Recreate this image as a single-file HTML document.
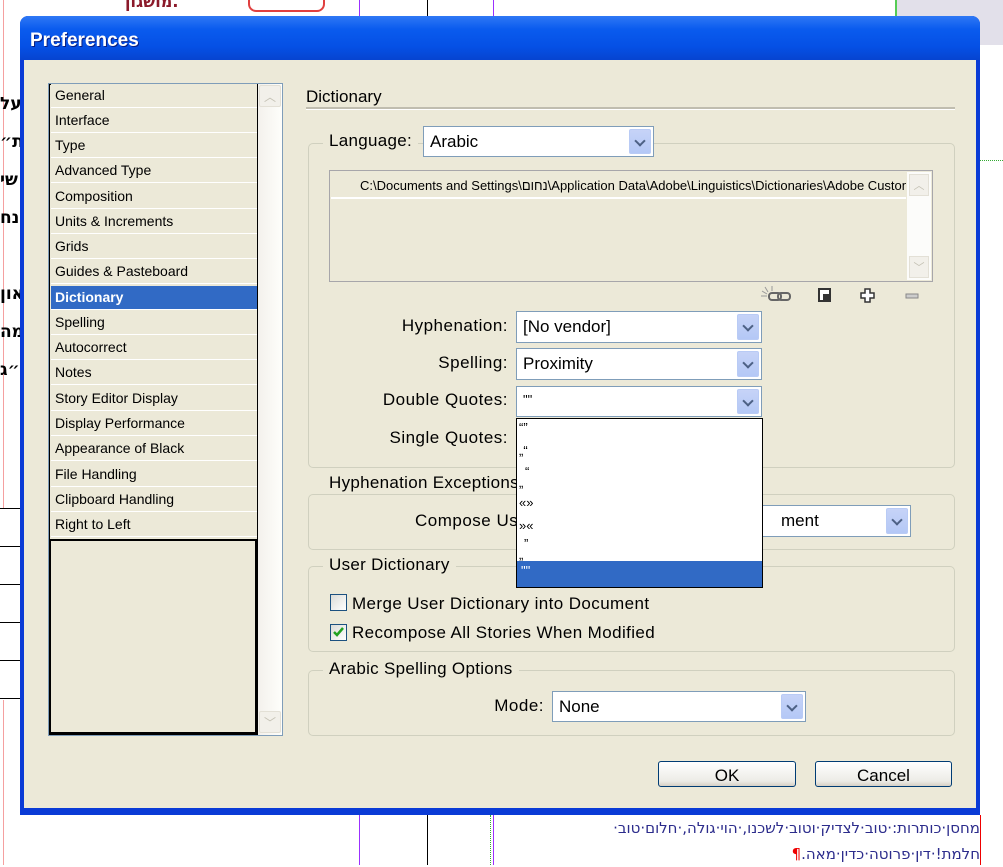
<!DOCTYPE html>
<html><head><meta charset="utf-8"><style>
*{margin:0;padding:0;box-sizing:border-box}
body{width:1003px;height:865px;position:relative;overflow:hidden;background:#fff;font-family:"Liberation Sans","DejaVu Sans",sans-serif;font-size:16px;color:#000}
.a{position:absolute}
.it{position:absolute;left:2px;width:206px;height:24px;background:#ECE9D8;border-bottom:1px solid #fff;font-size:14px;padding:3px 0 0 4px;white-space:nowrap}
.combo{position:absolute;background:#fff;border:1px solid #7F9DB9;padding:5px 0 0 6px;font-size:17px;white-space:nowrap}
.btn{position:absolute;right:2px;top:2px;bottom:2px;width:22px;background:linear-gradient(#C6D3F7,#B4C8F6);border:1px solid #B9CBF5;border-radius:2px}
.btn:after{content:"";position:absolute;left:6px;top:7px;width:6px;height:6px;border-right:2px solid #4D6185;border-bottom:2px solid #4D6185;transform:rotate(45deg)}
.grp{position:absolute;border:1px solid #D0D0BF;border-radius:5px}
.lg{position:absolute;background:#ECE9D8;padding:0 6px;font-size:17px;white-space:nowrap;letter-spacing:0.3px}
.lbl{position:absolute;font-size:17px;text-align:right;white-space:nowrap;letter-spacing:0.5px}
.pb{position:absolute;background:linear-gradient(#fff,#ECEBE6 80%,#D6D0C5);border:1px solid #003C74;border-radius:3px;text-align:center;font-size:17px;padding-top:4px}
.cb{position:absolute;width:17px;height:17px;border:1px solid #1C5180;background:linear-gradient(135deg,#DCDCD7,#fff)}
.dd{position:absolute;left:2px;font-size:13px;line-height:13px}
</style></head><body>
<!-- background doc -->
<div class="a" style="left:359px;top:0;width:1px;height:16px;background:#9B30FF"></div>
<div class="a" style="left:427px;top:0;width:1px;height:16px;background:#000"></div>
<div class="a" style="left:493px;top:0;width:1px;height:16px;background:#9B30FF"></div>
<div class="a" style="left:359px;top:815px;width:1px;height:50px;background:#9B30FF"></div>
<div class="a" style="left:427px;top:815px;width:1px;height:50px;background:#000"></div>
<div class="a" style="left:490px;top:815px;width:1px;height:50px;border-left:1px dotted #3A3"></div>
<div class="a" style="left:493px;top:815px;width:1px;height:50px;background:#9B30FF"></div>
<div class="a" style="left:980px;top:160px;width:23px;height:1px;border-top:1px dotted #3A3"></div>
<div class="a" style="left:125px;top:-8px;width:100px;height:18px;color:#8B1A2A;font-weight:bold;font-size:16px;font-family:'DejaVu Sans',sans-serif">מושגון.</div>
<div class="a" style="left:248px;top:-10px;width:77px;height:22px;border:2px solid #E04040;border-radius:8px;background:#fff"></div>
<div class="a" style="left:895px;top:0;width:108px;height:45px;background:#E2E0EA;border-left:2px solid #5C5"></div>
<div class="a" style="left:0;top:0;width:4px;height:865px;border-right:1px solid #F5A0A0"></div>
<div class="a" style="left:0;top:85px;font-weight:bold;font-size:17px;font-family:'DejaVu Sans',sans-serif;line-height:38px">על<br>ת״<br>שי<br>נח<br><br>און<br>מה<br>״ג</div>
<div class="a" style="left:0;top:508px;width:20px;height:192px;border-top:1px solid #000;background:repeating-linear-gradient(#fff 0,#fff 37px,#000 37px,#000 38px)"></div>
<div class="a" style="left:524px;top:815px;width:456px;font-size:15px;color:#2C2C8C;direction:rtl;line-height:26px;font-family:'DejaVu Sans',sans-serif">מחסן·כותרות:·טוב·לצדיק·וטוב·לשכנו,·הוי·גולה,·חלום·טוב·<br>חלמת!·דין·פרוטה·כדין·מאה.<span style="color:#E00">¶</span></div>
<div class="a" style="left:980px;top:815px;width:1px;height:50px;background:#E00"></div>
<!-- window -->
<div class="a" style="left:20px;top:16px;width:960px;height:799px;background:#0A3BD6;border-radius:8px 8px 0 0"></div>
<div class="a" style="left:20px;top:16px;width:960px;height:44px;background:linear-gradient(#2F78F5,#0A5BEE 30%,#0550E5 70%,#0644D0);border-radius:8px 8px 0 0"></div>
<div class="a" style="left:30px;top:30px;color:#fff;font-weight:bold;font-size:19px;text-shadow:1px 1px #0A1E80">Preferences</div>
<div class="a" style="left:24px;top:60px;width:952px;height:748px;background:#ECE9D8"></div>
<!-- list -->
<div class="a" style="left:48px;top:83px;width:235px;height:653px;border:1px solid #7F9DB9;background:#fff"></div>
<div class="a" style="left:49px;top:84px;width:209px;height:651px;border:1px solid #000;background:#ECE9D8"></div>
<div class="a" style="left:258px;top:84px;width:24px;height:651px;background:linear-gradient(90deg,#F3F1EC,#FEFEFB)"></div>
<div class="a" style="left:259px;top:85px;width:22px;height:22px;border:1px solid #E3E0D6;border-radius:2px;background:#F2F0EA;color:#C4C1B4;font-size:12px;text-align:center;line-height:22px">︿</div>
<div class="a" style="left:259px;top:711px;width:22px;height:22px;border:1px solid #E3E0D6;border-radius:2px;background:#F2F0EA;color:#C4C1B4;font-size:12px;text-align:center;line-height:22px">﹀</div>
<div class="a" style="left:49px;top:84px;width:209px;height:455px">
<div class="it" style="top:0">General</div>
<div class="it" style="top:25px">Interface</div>
<div class="it" style="top:50px">Type</div>
<div class="it" style="top:75px">Advanced Type</div>
<div class="it" style="top:101px">Composition</div>
<div class="it" style="top:126px">Units &amp; Increments</div>
<div class="it" style="top:151px">Grids</div>
<div class="it" style="top:176px">Guides &amp; Pasteboard</div>
<div class="it" style="top:202px;background:#316AC5;color:#fff;font-weight:bold">Dictionary</div>
<div class="it" style="top:227px">Spelling</div>
<div class="it" style="top:252px">Autocorrect</div>
<div class="it" style="top:277px">Notes</div>
<div class="it" style="top:303px">Story Editor Display</div>
<div class="it" style="top:328px">Display Performance</div>
<div class="it" style="top:353px">Appearance of Black</div>
<div class="it" style="top:379px">File Handling</div>
<div class="it" style="top:404px">Clipboard Handling</div>
<div class="it" style="top:429px">Right to Left</div>
</div>
<div class="a" style="left:50px;top:539px;width:207px;height:195px;border:2px solid #000;border-left:1px solid #000"></div>
<!-- right -->
<div class="a" style="left:306px;top:87px;font-size:17px">Dictionary</div>
<div class="a" style="left:306px;top:107px;width:649px;height:3px;border-top:2px solid #C0BDAF;border-bottom:1px solid #fff"></div>
<div class="grp" style="left:308px;top:143px;width:647px;height:325px"></div>
<div class="lg" style="left:323px;top:131px;height:22px;padding-top:0">Language:</div>
<div class="combo" style="left:423px;top:126px;width:231px;height:31px">Arabic<div class="btn"></div></div>
<div class="a" style="left:329px;top:170px;width:604px;height:112px;border:1px solid #A7A6AA;background:#ECE9D8"></div>
<div class="a" style="left:331px;top:172px;width:575px;height:27px;border-bottom:2px solid #fff;font-size:13px;padding:6px 0 0 29px;white-space:nowrap;overflow:hidden">C:\Documents and Settings\נחום\Application Data\Adobe\Linguistics\Dictionaries\Adobe Custom</div>
<div class="a" style="left:907px;top:172px;width:24px;height:108px;background:#FCFCFA"></div>
<div class="a" style="left:909px;top:174px;width:20px;height:22px;border:1px solid #E3E0D6;background:#F2F0EA;color:#C4C1B4;font-size:11px;text-align:center;line-height:22px">︿</div>
<div class="a" style="left:909px;top:256px;width:20px;height:22px;border:1px solid #E3E0D6;background:#F2F0EA;color:#C4C1B4;font-size:11px;text-align:center;line-height:22px">﹀</div>
<svg class="a" style="left:760px;top:285px" width="160" height="20">
<path d="M2 6l5 3M5 2l3 5M12 1v5M1 11h6" stroke="#999" stroke-width="1"/>
<rect x="9" y="8" width="12" height="7" rx="3" fill="none" stroke="#666" stroke-width="2"/><rect x="18" y="8" width="12" height="7" rx="3" fill="none" stroke="#666" stroke-width="2"/>
<rect x="59" y="4" width="11" height="12" fill="#fff" stroke="#333" stroke-width="2"/><rect x="63" y="9" width="6" height="6" fill="#333"/>
<path d="M105 4h5v4h4v5h-4v4h-5v-4h-4v-5h4z" fill="#fff" stroke="#333" stroke-width="1.5"/>
<rect x="146" y="9" width="12" height="4" fill="#ccc" stroke="#888" stroke-width="1"/>
</svg>
<div class="lbl" style="left:360px;width:148px;top:316px">Hyphenation:</div>
<div class="combo" style="left:516px;top:311px;width:246px;height:32px">[No vendor]<div class="btn"></div></div>
<div class="lbl" style="left:360px;width:148px;top:353px">Spelling:</div>
<div class="combo" style="left:516px;top:348px;width:246px;height:32px">Proximity<div class="btn"></div></div>
<div class="lbl" style="left:340px;width:168px;top:390px">Double Quotes:</div>
<div class="combo" style="left:516px;top:386px;width:246px;height:31px;font-size:13px">""<div class="btn"></div></div>
<div class="lbl" style="left:340px;width:168px;top:428px">Single Quotes:</div>
<div class="grp" style="left:308px;top:494px;width:647px;height:56px"></div>
<div class="lg" style="left:323px;top:473px">Hyphenation Exceptions</div>
<div class="lbl" style="left:380px;width:140px;top:511px;text-align:left;padding-left:35px">Compose Using:</div>
<div class="combo" style="left:760px;top:505px;width:151px;height:32px;padding-left:20px">ment<div class="btn"></div></div>
<div class="grp" style="left:308px;top:566px;width:647px;height:86px"></div>
<div class="lg" style="left:323px;top:555px">User Dictionary</div>
<div class="cb" style="left:330px;top:594px"></div>
<div class="a" style="left:352px;top:594px;font-size:17px;letter-spacing:0.4px">Merge User Dictionary into Document</div>
<div class="cb" style="left:330px;top:624px"><svg width="15" height="15" style="position:absolute;left:0;top:0"><path d="M3 7l3 3 6-7" stroke="#21A121" stroke-width="2.5" fill="none"/></svg></div>
<div class="a" style="left:352px;top:623px;font-size:17px;letter-spacing:0.4px">Recompose All Stories When Modified</div>
<div class="grp" style="left:308px;top:670px;width:647px;height:66px"></div>
<div class="lg" style="left:323px;top:659px">Arabic Spelling Options</div>
<div class="lbl" style="left:440px;width:104px;top:696px">Mode:</div>
<div class="combo" style="left:552px;top:691px;width:254px;height:31px">None<div class="btn"></div></div>
<!-- dropdown -->
<div class="a" style="left:516px;top:418px;width:247px;height:170px;border:1px solid #000;background:#fff">
<div class="dd" style="top:2px">“”</div>
<div class="dd" style="top:25px">„“</div>
<div class="dd" style="top:46px;left:8px">“</div>
<div class="dd" style="top:57px">„</div>
<div class="dd" style="top:77px">«»</div>
<div class="dd" style="top:100px">»«</div>
<div class="dd" style="top:118px;left:7px">”</div>
<div class="dd" style="top:129px">„</div>
<div class="a" style="left:0;top:142px;width:245px;height:26px;background:#316AC5;color:#fff;font-size:13px;padding:2px 0 0 4px">""</div>
</div>
<div class="pb" style="left:658px;top:761px;width:138px;height:26px">OK</div>
<div class="pb" style="left:815px;top:761px;width:137px;height:26px">Cancel</div>
</body></html>
